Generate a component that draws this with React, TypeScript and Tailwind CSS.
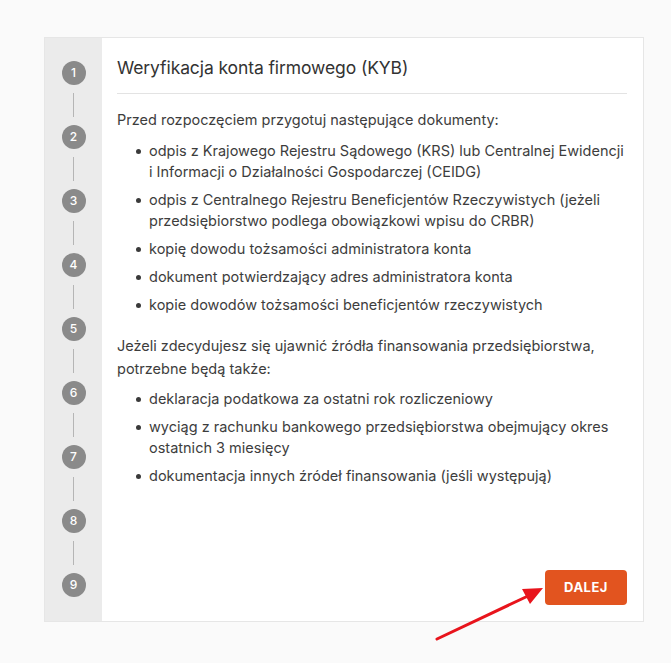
import React from "react";

const steps = [1, 2, 3, 4, 5, 6, 7, 8, 9];

const docs = [
  "odpis z Krajowego Rejestru Sądowego (KRS) lub Centralnej Ewidencji i Informacji o Działalności Gospodarczej (CEIDG)",
  "odpis z Centralnego Rejestru Beneficjentów Rzeczywistych (jeżeli przedsiębiorstwo podlega obowiązkowi wpisu do CRBR)",
  "kopię dowodu tożsamości administratora konta",
  "dokument potwierdzający adres administratora konta",
  "kopie dowodów tożsamości beneficjentów rzeczywistych",
];

const extra = [
  "deklaracja podatkowa za ostatni rok rozliczeniowy",
  "wyciąg z rachunku bankowego przedsiębiorstwa obejmujący okres ostatnich 3 miesięcy",
  "dokumentacja innych źródeł finansowania (jeśli występują)",
];

function BulletList({ items }: { items: string[] }) {
  return (
    <ul className="flex flex-col gap-[7px] pl-[32px]">
      {items.map((t) => (
        <li key={t} className="relative">
          <span className="absolute -left-[13px] top-[9px] h-[5px] w-[5px] rounded-full bg-[#3a3a3a]" />
          {t}
        </li>
      ))}
    </ul>
  );
}

export default function App() {
  return (
    <div
      className="relative min-h-[663px] bg-[#fafafa] pt-[37px] pl-[44px]"
      style={{ fontFamily: "Inter, 'Noto Sans', sans-serif" }}
    >
      <div className="flex w-[600px] h-[585px] border border-[#e6e6e6] bg-white">
        {/* step rail */}
        <div className="w-[57px] bg-[#ebebeb] flex flex-col items-center pt-[23px]">
          {steps.map((n, i) => (
            <div key={n} className="flex flex-col items-center">
              <div className="w-[24px] h-[24px] rounded-full bg-[#8a8a8a] text-white text-[12px] font-medium flex items-center justify-center">
                {n}
              </div>
              {i < steps.length - 1 && (
                <div className="w-px h-[24px] bg-[#b5b5b5] my-[8px]" />
              )}
            </div>
          ))}
        </div>

        {/* content */}
        <div className="flex-1 flex flex-col pl-[15px] pr-[16px] pt-[17px] pb-[16px] text-[#3d3d3d]">
          <h1 className="text-[17.5px] leading-[26px] text-[#333] tracking-[-0.1px]">
            Weryfikacja konta firmowego (KYB)
          </h1>
          <div className="h-px bg-[#e3e3e3] mt-[12px] mb-[15px]" />
          <div className="text-[14.5px] leading-[21px] -mr-[4px]">
            <p className="mb-[10px]">Przed rozpoczęciem przygotuj następujące dokumenty:</p>
            <BulletList items={docs} />
            <p className="mt-[19px] mb-[8px] leading-[23px]">
              Jeżeli zdecydujesz się ujawnić źródła finansowania przedsiębiorstwa, potrzebne będą także:
            </p>
            <BulletList items={extra} />
          </div>
          <div className="mt-auto flex justify-end">
            <button className="w-[82px] h-[35px] rounded-[4px] bg-[#e2541f] text-white text-[13px] font-bold tracking-[0.5px]">
              DALEJ
            </button>
          </div>
        </div>
      </div>

      {/* annotation arrow */}
      <svg className="absolute left-[430px] top-[580px]" width="120" height="65" viewBox="0 0 120 65">
        <line x1="7" y1="59" x2="98" y2="16" stroke="#e8141c" strokeWidth="3" strokeLinecap="round" />
        <polygon points="113,8 92,9 100,24" fill="#e8141c" />
      </svg>
    </div>
  );
}
